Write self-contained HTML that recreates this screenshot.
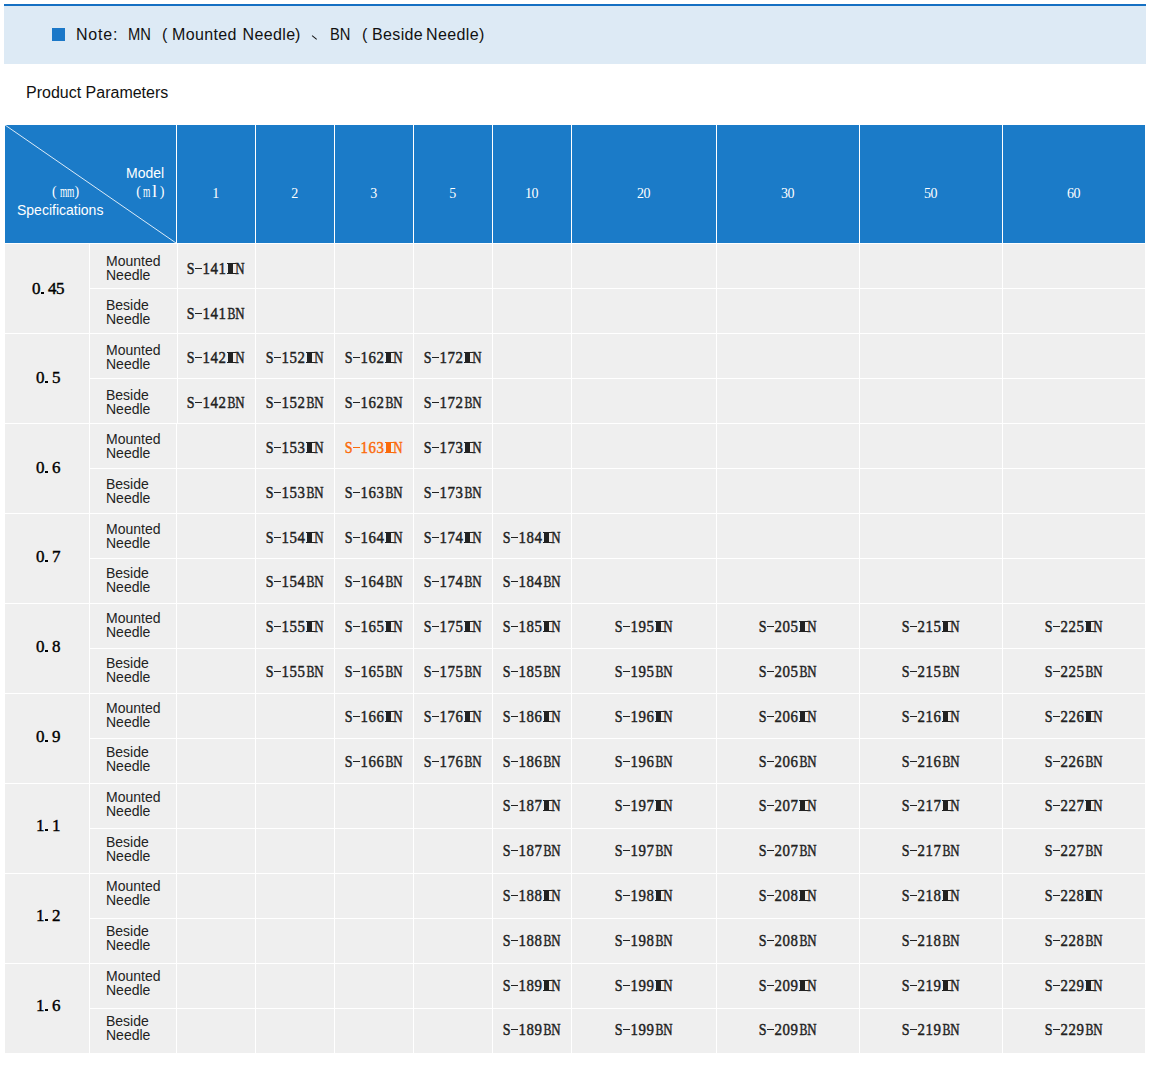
<!DOCTYPE html>
<html><head><meta charset="utf-8"><style>
*{margin:0;padding:0;box-sizing:border-box}
html,body{width:1150px;height:1090px;background:#fff;overflow:hidden;position:relative}
.a{position:absolute}
.sans{font-family:"Liberation Sans",sans-serif}
.c{position:absolute;background:#efefef}
.h{position:absolute;background:#1b7bc8}
.t{position:absolute;white-space:nowrap;line-height:16px}
.code{position:absolute;white-space:nowrap;font-family:"Liberation Serif",serif;font-size:16.5px;font-weight:normal;-webkit-text-stroke:0.45px currentColor;line-height:16px;color:#222;height:16px}
.code b,.num b,.hn b{display:inline-block;width:8px;text-align:center;font-weight:inherit;position:relative;height:16px;vertical-align:top}
.code b i,.num b i,.hn b i{font-style:normal;display:inline-block;transform:scaleX(0.78)}
.code b.d:before,.num b.d:before{content:"";position:absolute;left:1px;top:7px;width:7px;height:1.4px;background:currentColor}
.code b.m:before{content:"";position:absolute;left:1.5px;top:2px;width:5.5px;height:11px;background:currentColor}

.code b.m i{position:absolute;left:0.5px;top:2px;width:9px;height:11px;border-top:1px solid currentColor;border-bottom:1px solid currentColor;transform:none}
.num b.p:before{content:"";position:absolute;left:1px;top:11px;width:3px;height:2px;background:currentColor}
.lbl{position:absolute;white-space:nowrap;font-family:"Liberation Sans",sans-serif;font-size:14px;line-height:14px;color:#222}
.num{position:absolute;white-space:nowrap;font-family:"Liberation Serif",serif;font-size:17px;font-weight:normal;-webkit-text-stroke:0.4px #000;line-height:16px;color:#000;height:16px}
.hn{position:absolute;white-space:nowrap;font-family:"Liberation Serif",serif;font-size:13px;line-height:16px;color:#fff;height:16px}
.hn b{width:6.5px}
.hn b i{transform:none}
.hd{font-size:14px}
.hd b i{transform:scaleX(1)!important}
</style></head><body>

<div class="a" style="left:4px;top:4px;width:1142px;height:60px;background:#ddeaf5;border-top:2px solid #1570c3"></div>
<div class="a" style="left:52px;top:28px;width:13px;height:13px;background:#1b78c8"></div>
<div class="t sans" style="left:76px;top:27px;font-size:16px;color:#111;letter-spacing:0.8px;transform:scaleX(1);transform-origin:left top">Note</div>
<div class="t sans" style="left:113px;top:27px;font-size:16px;color:#111;letter-spacing:0px;transform:scaleX(1);transform-origin:left top">:</div>
<div class="t sans" style="left:127.5px;top:27px;font-size:16px;color:#111;letter-spacing:0px;transform:scaleX(0.92);transform-origin:left top">MN</div>
<div class="t sans" style="left:162px;top:27px;font-size:16px;color:#111;letter-spacing:0px;transform:scaleX(1);transform-origin:left top">(</div>
<div class="t sans" style="left:172px;top:27px;font-size:16px;color:#111;letter-spacing:0.37px;transform:scaleX(1);transform-origin:left top">Mounted</div>
<div class="t sans" style="left:242.5px;top:27px;font-size:16px;color:#111;letter-spacing:0.37px;transform:scaleX(1);transform-origin:left top">Needle</div>
<div class="t sans" style="left:295px;top:27px;font-size:16px;color:#111;letter-spacing:0px;transform:scaleX(1);transform-origin:left top">)</div>
<div class="a" style="left:311.5px;top:35px;width:6px;height:1.3px;background:#111;transform:rotate(40deg);transform-origin:left center"></div>
<div class="t sans" style="left:330px;top:27px;font-size:16px;color:#111;letter-spacing:0px;transform:scaleX(0.92);transform-origin:left top">BN</div>
<div class="t sans" style="left:362px;top:27px;font-size:16px;color:#111;letter-spacing:0px;transform:scaleX(1);transform-origin:left top">(</div>
<div class="t sans" style="left:372px;top:27px;font-size:16px;color:#111;letter-spacing:0.37px;transform:scaleX(1);transform-origin:left top">Beside</div>
<div class="t sans" style="left:426px;top:27px;font-size:16px;color:#111;letter-spacing:0.37px;transform:scaleX(1);transform-origin:left top">Needle</div>
<div class="t sans" style="left:479px;top:27px;font-size:16px;color:#111;letter-spacing:0px;transform:scaleX(1);transform-origin:left top">)</div>
<div class="t sans" style="left:26px;top:85px;font-size:16px;color:#111">Product Parameters</div>
<div class="a" style="left:5px;top:125px;width:1140px;height:928px;background:#fff"></div>
<div class="h" style="left:5px;top:125px;width:171px;height:118px"></div>
<div class="h" style="left:177px;top:125px;width:78px;height:118px"></div>
<div class="h" style="left:256px;top:125px;width:78px;height:118px"></div>
<div class="h" style="left:335px;top:125px;width:78px;height:118px"></div>
<div class="h" style="left:414px;top:125px;width:78px;height:118px"></div>
<div class="h" style="left:493px;top:125px;width:78px;height:118px"></div>
<div class="h" style="left:572px;top:125px;width:144px;height:118px"></div>
<div class="h" style="left:717px;top:125px;width:142px;height:118px"></div>
<div class="h" style="left:860px;top:125px;width:142px;height:118px"></div>
<div class="h" style="left:1003px;top:125px;width:142px;height:118px"></div>
<svg class="a" style="left:5px;top:125px" width="171" height="118"><line x1="0" y1="0" x2="171" y2="118" stroke="#fff" stroke-opacity="0.85" stroke-width="1"/></svg>
<div class="t sans" style="left:126px;top:165px;font-size:14px;color:#fff">Model</div>
<div class="t sans" style="left:17px;top:202px;font-size:14px;color:#fff">Specifications</div>
<div class="a" style="left:52px;top:185px;font-family:'Liberation Serif',serif;font-size:14px;line-height:14px;color:#fff;transform:scaleX(1);transform-origin:left top;white-space:nowrap">(</div>
<div class="a" style="left:59.5px;top:183px;font-family:'Liberation Serif',serif;font-size:17.5px;line-height:17.5px;color:#fff;transform:scaleX(0.54);transform-origin:left top;white-space:nowrap">m</div>
<div class="a" style="left:67px;top:183px;font-family:'Liberation Serif',serif;font-size:17.5px;line-height:17.5px;color:#fff;transform:scaleX(0.54);transform-origin:left top;white-space:nowrap">m</div>
<div class="a" style="left:74.5px;top:185px;font-family:'Liberation Serif',serif;font-size:14px;line-height:14px;color:#fff;transform:scaleX(1);transform-origin:left top;white-space:nowrap">)</div>
<div class="a" style="left:136.3px;top:185px;font-family:'Liberation Serif',serif;font-size:14px;line-height:14px;color:#fff;transform:scaleX(1);transform-origin:left top;white-space:nowrap">(</div>
<div class="a" style="left:143.2px;top:183px;font-family:'Liberation Serif',serif;font-size:17.5px;line-height:17.5px;color:#fff;transform:scaleX(0.54);transform-origin:left top;white-space:nowrap">m</div>
<div class="a" style="left:151.5px;top:183px;font-family:'Liberation Serif',serif;font-size:17px;line-height:17px;color:#fff;transform:scaleX(1.1);transform-origin:left top;white-space:nowrap">l</div>
<div class="a" style="left:159.7px;top:185px;font-family:'Liberation Serif',serif;font-size:14px;line-height:14px;color:#fff;transform:scaleX(1);transform-origin:left top;white-space:nowrap">)</div>
<div class="hn hd" style="left:212.2px;top:186px"><b><i style="transform:scaleX(1)">1</i></b></div>
<div class="hn hd" style="left:291.2px;top:186px"><b><i style="transform:scaleX(1)">2</i></b></div>
<div class="hn hd" style="left:370.2px;top:186px"><b><i style="transform:scaleX(1)">3</i></b></div>
<div class="hn hd" style="left:449.2px;top:186px"><b><i style="transform:scaleX(1)">5</i></b></div>
<div class="hn hd" style="left:525.0px;top:186px"><b><i style="transform:scaleX(1)">1</i></b><b><i style="transform:scaleX(1)">0</i></b></div>
<div class="hn hd" style="left:637.0px;top:186px"><b><i style="transform:scaleX(1)">2</i></b><b><i style="transform:scaleX(1)">0</i></b></div>
<div class="hn hd" style="left:781.0px;top:186px"><b><i style="transform:scaleX(1)">3</i></b><b><i style="transform:scaleX(1)">0</i></b></div>
<div class="hn hd" style="left:924.0px;top:186px"><b><i style="transform:scaleX(1)">5</i></b><b><i style="transform:scaleX(1)">0</i></b></div>
<div class="hn hd" style="left:1067.0px;top:186px"><b><i style="transform:scaleX(1)">6</i></b><b><i style="transform:scaleX(1)">0</i></b></div>
<div class="c" style="left:5px;top:244px;width:84px;height:89px"></div>
<div class="num" style="left:32.0px;top:281px"><b><i style="transform:scaleX(1)">0</i></b><b class="p"></b><b><i style="transform:scaleX(1)">4</i></b><b><i style="transform:scaleX(1)">5</i></b></div>
<div class="c" style="left:90px;top:244px;width:87px;height:44px"></div>
<div class="c" style="left:178px;top:244px;width:77px;height:44px"></div>
<div class="c" style="left:256px;top:244px;width:78px;height:44px"></div>
<div class="c" style="left:335px;top:244px;width:78px;height:44px"></div>
<div class="c" style="left:414px;top:244px;width:78px;height:44px"></div>
<div class="c" style="left:493px;top:244px;width:78px;height:44px"></div>
<div class="c" style="left:572px;top:244px;width:144px;height:44px"></div>
<div class="c" style="left:717px;top:244px;width:142px;height:44px"></div>
<div class="c" style="left:860px;top:244px;width:142px;height:44px"></div>
<div class="c" style="left:1003px;top:244px;width:142px;height:44px"></div>
<div class="lbl" style="left:106px;top:254px">Mounted<br>Needle</div>
<div class="code" style="left:186.0px;top:261px;color:#222"><b><i style="transform:scaleX(0.85)">S</i></b><b class="d"></b><b><i style="transform:scaleX(0.9)">1</i></b><b><i style="transform:scaleX(0.9)">4</i></b><b><i style="transform:scaleX(0.9)">1</i></b><b class="m"><i></i></b><b><i style="transform:scaleX(0.78)">N</i></b></div>
<div class="c" style="left:90px;top:289px;width:87px;height:44px"></div>
<div class="c" style="left:178px;top:289px;width:77px;height:44px"></div>
<div class="c" style="left:256px;top:289px;width:78px;height:44px"></div>
<div class="c" style="left:335px;top:289px;width:78px;height:44px"></div>
<div class="c" style="left:414px;top:289px;width:78px;height:44px"></div>
<div class="c" style="left:493px;top:289px;width:78px;height:44px"></div>
<div class="c" style="left:572px;top:289px;width:144px;height:44px"></div>
<div class="c" style="left:717px;top:289px;width:142px;height:44px"></div>
<div class="c" style="left:860px;top:289px;width:142px;height:44px"></div>
<div class="c" style="left:1003px;top:289px;width:142px;height:44px"></div>
<div class="lbl" style="left:106px;top:298px">Beside<br>Needle</div>
<div class="code" style="left:186.0px;top:306px;color:#222"><b><i style="transform:scaleX(0.85)">S</i></b><b class="d"></b><b><i style="transform:scaleX(0.9)">1</i></b><b><i style="transform:scaleX(0.9)">4</i></b><b><i style="transform:scaleX(0.9)">1</i></b><b><i style="transform:scaleX(0.72)">B</i></b><b><i style="transform:scaleX(0.78)">N</i></b></div>
<div class="c" style="left:5px;top:334px;width:84px;height:89px"></div>
<div class="num" style="left:36.0px;top:370px"><b><i style="transform:scaleX(1)">0</i></b><b class="p"></b><b><i style="transform:scaleX(1)">5</i></b></div>
<div class="c" style="left:90px;top:334px;width:87px;height:44px"></div>
<div class="c" style="left:178px;top:334px;width:77px;height:44px"></div>
<div class="c" style="left:256px;top:334px;width:78px;height:44px"></div>
<div class="c" style="left:335px;top:334px;width:78px;height:44px"></div>
<div class="c" style="left:414px;top:334px;width:78px;height:44px"></div>
<div class="c" style="left:493px;top:334px;width:78px;height:44px"></div>
<div class="c" style="left:572px;top:334px;width:144px;height:44px"></div>
<div class="c" style="left:717px;top:334px;width:142px;height:44px"></div>
<div class="c" style="left:860px;top:334px;width:142px;height:44px"></div>
<div class="c" style="left:1003px;top:334px;width:142px;height:44px"></div>
<div class="lbl" style="left:106px;top:343px">Mounted<br>Needle</div>
<div class="code" style="left:186.0px;top:350px;color:#222"><b><i style="transform:scaleX(0.85)">S</i></b><b class="d"></b><b><i style="transform:scaleX(0.9)">1</i></b><b><i style="transform:scaleX(0.9)">4</i></b><b><i style="transform:scaleX(0.9)">2</i></b><b class="m"><i></i></b><b><i style="transform:scaleX(0.78)">N</i></b></div>
<div class="code" style="left:265.0px;top:350px;color:#222"><b><i style="transform:scaleX(0.85)">S</i></b><b class="d"></b><b><i style="transform:scaleX(0.9)">1</i></b><b><i style="transform:scaleX(0.9)">5</i></b><b><i style="transform:scaleX(0.9)">2</i></b><b class="m"><i></i></b><b><i style="transform:scaleX(0.78)">N</i></b></div>
<div class="code" style="left:344.0px;top:350px;color:#222"><b><i style="transform:scaleX(0.85)">S</i></b><b class="d"></b><b><i style="transform:scaleX(0.9)">1</i></b><b><i style="transform:scaleX(0.9)">6</i></b><b><i style="transform:scaleX(0.9)">2</i></b><b class="m"><i></i></b><b><i style="transform:scaleX(0.78)">N</i></b></div>
<div class="code" style="left:423.0px;top:350px;color:#222"><b><i style="transform:scaleX(0.85)">S</i></b><b class="d"></b><b><i style="transform:scaleX(0.9)">1</i></b><b><i style="transform:scaleX(0.9)">7</i></b><b><i style="transform:scaleX(0.9)">2</i></b><b class="m"><i></i></b><b><i style="transform:scaleX(0.78)">N</i></b></div>
<div class="c" style="left:90px;top:379px;width:87px;height:44px"></div>
<div class="c" style="left:178px;top:379px;width:77px;height:44px"></div>
<div class="c" style="left:256px;top:379px;width:78px;height:44px"></div>
<div class="c" style="left:335px;top:379px;width:78px;height:44px"></div>
<div class="c" style="left:414px;top:379px;width:78px;height:44px"></div>
<div class="c" style="left:493px;top:379px;width:78px;height:44px"></div>
<div class="c" style="left:572px;top:379px;width:144px;height:44px"></div>
<div class="c" style="left:717px;top:379px;width:142px;height:44px"></div>
<div class="c" style="left:860px;top:379px;width:142px;height:44px"></div>
<div class="c" style="left:1003px;top:379px;width:142px;height:44px"></div>
<div class="lbl" style="left:106px;top:388px">Beside<br>Needle</div>
<div class="code" style="left:186.0px;top:395px;color:#222"><b><i style="transform:scaleX(0.85)">S</i></b><b class="d"></b><b><i style="transform:scaleX(0.9)">1</i></b><b><i style="transform:scaleX(0.9)">4</i></b><b><i style="transform:scaleX(0.9)">2</i></b><b><i style="transform:scaleX(0.72)">B</i></b><b><i style="transform:scaleX(0.78)">N</i></b></div>
<div class="code" style="left:265.0px;top:395px;color:#222"><b><i style="transform:scaleX(0.85)">S</i></b><b class="d"></b><b><i style="transform:scaleX(0.9)">1</i></b><b><i style="transform:scaleX(0.9)">5</i></b><b><i style="transform:scaleX(0.9)">2</i></b><b><i style="transform:scaleX(0.72)">B</i></b><b><i style="transform:scaleX(0.78)">N</i></b></div>
<div class="code" style="left:344.0px;top:395px;color:#222"><b><i style="transform:scaleX(0.85)">S</i></b><b class="d"></b><b><i style="transform:scaleX(0.9)">1</i></b><b><i style="transform:scaleX(0.9)">6</i></b><b><i style="transform:scaleX(0.9)">2</i></b><b><i style="transform:scaleX(0.72)">B</i></b><b><i style="transform:scaleX(0.78)">N</i></b></div>
<div class="code" style="left:423.0px;top:395px;color:#222"><b><i style="transform:scaleX(0.85)">S</i></b><b class="d"></b><b><i style="transform:scaleX(0.9)">1</i></b><b><i style="transform:scaleX(0.9)">7</i></b><b><i style="transform:scaleX(0.9)">2</i></b><b><i style="transform:scaleX(0.72)">B</i></b><b><i style="transform:scaleX(0.78)">N</i></b></div>
<div class="c" style="left:5px;top:424px;width:84px;height:89px"></div>
<div class="num" style="left:36.0px;top:460px"><b><i style="transform:scaleX(1)">0</i></b><b class="p"></b><b><i style="transform:scaleX(1)">6</i></b></div>
<div class="c" style="left:90px;top:424px;width:86px;height:44px"></div>
<div class="c" style="left:177px;top:424px;width:78px;height:44px"></div>
<div class="c" style="left:256px;top:424px;width:78px;height:44px"></div>
<div class="c" style="left:335px;top:424px;width:78px;height:44px"></div>
<div class="c" style="left:414px;top:424px;width:78px;height:44px"></div>
<div class="c" style="left:493px;top:424px;width:78px;height:44px"></div>
<div class="c" style="left:572px;top:424px;width:144px;height:44px"></div>
<div class="c" style="left:717px;top:424px;width:142px;height:44px"></div>
<div class="c" style="left:860px;top:424px;width:142px;height:44px"></div>
<div class="c" style="left:1003px;top:424px;width:142px;height:44px"></div>
<div class="lbl" style="left:106px;top:432px">Mounted<br>Needle</div>
<div class="code" style="left:265.0px;top:440px;color:#222"><b><i style="transform:scaleX(0.85)">S</i></b><b class="d"></b><b><i style="transform:scaleX(0.9)">1</i></b><b><i style="transform:scaleX(0.9)">5</i></b><b><i style="transform:scaleX(0.9)">3</i></b><b class="m"><i></i></b><b><i style="transform:scaleX(0.78)">N</i></b></div>
<div class="code" style="left:344.0px;top:440px;color:#fb6a0a"><b><i style="transform:scaleX(0.85)">S</i></b><b class="d"></b><b><i style="transform:scaleX(0.9)">1</i></b><b><i style="transform:scaleX(0.9)">6</i></b><b><i style="transform:scaleX(0.9)">3</i></b><b class="m"><i></i></b><b><i style="transform:scaleX(0.78)">N</i></b></div>
<div class="code" style="left:423.0px;top:440px;color:#222"><b><i style="transform:scaleX(0.85)">S</i></b><b class="d"></b><b><i style="transform:scaleX(0.9)">1</i></b><b><i style="transform:scaleX(0.9)">7</i></b><b><i style="transform:scaleX(0.9)">3</i></b><b class="m"><i></i></b><b><i style="transform:scaleX(0.78)">N</i></b></div>
<div class="c" style="left:90px;top:469px;width:86px;height:44px"></div>
<div class="c" style="left:177px;top:469px;width:78px;height:44px"></div>
<div class="c" style="left:256px;top:469px;width:78px;height:44px"></div>
<div class="c" style="left:335px;top:469px;width:78px;height:44px"></div>
<div class="c" style="left:414px;top:469px;width:78px;height:44px"></div>
<div class="c" style="left:493px;top:469px;width:78px;height:44px"></div>
<div class="c" style="left:572px;top:469px;width:144px;height:44px"></div>
<div class="c" style="left:717px;top:469px;width:142px;height:44px"></div>
<div class="c" style="left:860px;top:469px;width:142px;height:44px"></div>
<div class="c" style="left:1003px;top:469px;width:142px;height:44px"></div>
<div class="lbl" style="left:106px;top:477px">Beside<br>Needle</div>
<div class="code" style="left:265.0px;top:485px;color:#222"><b><i style="transform:scaleX(0.85)">S</i></b><b class="d"></b><b><i style="transform:scaleX(0.9)">1</i></b><b><i style="transform:scaleX(0.9)">5</i></b><b><i style="transform:scaleX(0.9)">3</i></b><b><i style="transform:scaleX(0.72)">B</i></b><b><i style="transform:scaleX(0.78)">N</i></b></div>
<div class="code" style="left:344.0px;top:485px;color:#222"><b><i style="transform:scaleX(0.85)">S</i></b><b class="d"></b><b><i style="transform:scaleX(0.9)">1</i></b><b><i style="transform:scaleX(0.9)">6</i></b><b><i style="transform:scaleX(0.9)">3</i></b><b><i style="transform:scaleX(0.72)">B</i></b><b><i style="transform:scaleX(0.78)">N</i></b></div>
<div class="code" style="left:423.0px;top:485px;color:#222"><b><i style="transform:scaleX(0.85)">S</i></b><b class="d"></b><b><i style="transform:scaleX(0.9)">1</i></b><b><i style="transform:scaleX(0.9)">7</i></b><b><i style="transform:scaleX(0.9)">3</i></b><b><i style="transform:scaleX(0.72)">B</i></b><b><i style="transform:scaleX(0.78)">N</i></b></div>
<div class="c" style="left:5px;top:514px;width:84px;height:89px"></div>
<div class="num" style="left:36.0px;top:549px"><b><i style="transform:scaleX(1)">0</i></b><b class="p"></b><b><i style="transform:scaleX(1)">7</i></b></div>
<div class="c" style="left:90px;top:514px;width:86px;height:44px"></div>
<div class="c" style="left:177px;top:514px;width:78px;height:44px"></div>
<div class="c" style="left:256px;top:514px;width:78px;height:44px"></div>
<div class="c" style="left:335px;top:514px;width:78px;height:44px"></div>
<div class="c" style="left:414px;top:514px;width:78px;height:44px"></div>
<div class="c" style="left:493px;top:514px;width:78px;height:44px"></div>
<div class="c" style="left:572px;top:514px;width:144px;height:44px"></div>
<div class="c" style="left:717px;top:514px;width:142px;height:44px"></div>
<div class="c" style="left:860px;top:514px;width:142px;height:44px"></div>
<div class="c" style="left:1003px;top:514px;width:142px;height:44px"></div>
<div class="lbl" style="left:106px;top:522px">Mounted<br>Needle</div>
<div class="code" style="left:265.0px;top:530px;color:#222"><b><i style="transform:scaleX(0.85)">S</i></b><b class="d"></b><b><i style="transform:scaleX(0.9)">1</i></b><b><i style="transform:scaleX(0.9)">5</i></b><b><i style="transform:scaleX(0.9)">4</i></b><b class="m"><i></i></b><b><i style="transform:scaleX(0.78)">N</i></b></div>
<div class="code" style="left:344.0px;top:530px;color:#222"><b><i style="transform:scaleX(0.85)">S</i></b><b class="d"></b><b><i style="transform:scaleX(0.9)">1</i></b><b><i style="transform:scaleX(0.9)">6</i></b><b><i style="transform:scaleX(0.9)">4</i></b><b class="m"><i></i></b><b><i style="transform:scaleX(0.78)">N</i></b></div>
<div class="code" style="left:423.0px;top:530px;color:#222"><b><i style="transform:scaleX(0.85)">S</i></b><b class="d"></b><b><i style="transform:scaleX(0.9)">1</i></b><b><i style="transform:scaleX(0.9)">7</i></b><b><i style="transform:scaleX(0.9)">4</i></b><b class="m"><i></i></b><b><i style="transform:scaleX(0.78)">N</i></b></div>
<div class="code" style="left:502.0px;top:530px;color:#222"><b><i style="transform:scaleX(0.85)">S</i></b><b class="d"></b><b><i style="transform:scaleX(0.9)">1</i></b><b><i style="transform:scaleX(0.9)">8</i></b><b><i style="transform:scaleX(0.9)">4</i></b><b class="m"><i></i></b><b><i style="transform:scaleX(0.78)">N</i></b></div>
<div class="c" style="left:90px;top:559px;width:86px;height:44px"></div>
<div class="c" style="left:177px;top:559px;width:78px;height:44px"></div>
<div class="c" style="left:256px;top:559px;width:78px;height:44px"></div>
<div class="c" style="left:335px;top:559px;width:78px;height:44px"></div>
<div class="c" style="left:414px;top:559px;width:78px;height:44px"></div>
<div class="c" style="left:493px;top:559px;width:78px;height:44px"></div>
<div class="c" style="left:572px;top:559px;width:144px;height:44px"></div>
<div class="c" style="left:717px;top:559px;width:142px;height:44px"></div>
<div class="c" style="left:860px;top:559px;width:142px;height:44px"></div>
<div class="c" style="left:1003px;top:559px;width:142px;height:44px"></div>
<div class="lbl" style="left:106px;top:566px">Beside<br>Needle</div>
<div class="code" style="left:265.0px;top:574px;color:#222"><b><i style="transform:scaleX(0.85)">S</i></b><b class="d"></b><b><i style="transform:scaleX(0.9)">1</i></b><b><i style="transform:scaleX(0.9)">5</i></b><b><i style="transform:scaleX(0.9)">4</i></b><b><i style="transform:scaleX(0.72)">B</i></b><b><i style="transform:scaleX(0.78)">N</i></b></div>
<div class="code" style="left:344.0px;top:574px;color:#222"><b><i style="transform:scaleX(0.85)">S</i></b><b class="d"></b><b><i style="transform:scaleX(0.9)">1</i></b><b><i style="transform:scaleX(0.9)">6</i></b><b><i style="transform:scaleX(0.9)">4</i></b><b><i style="transform:scaleX(0.72)">B</i></b><b><i style="transform:scaleX(0.78)">N</i></b></div>
<div class="code" style="left:423.0px;top:574px;color:#222"><b><i style="transform:scaleX(0.85)">S</i></b><b class="d"></b><b><i style="transform:scaleX(0.9)">1</i></b><b><i style="transform:scaleX(0.9)">7</i></b><b><i style="transform:scaleX(0.9)">4</i></b><b><i style="transform:scaleX(0.72)">B</i></b><b><i style="transform:scaleX(0.78)">N</i></b></div>
<div class="code" style="left:502.0px;top:574px;color:#222"><b><i style="transform:scaleX(0.85)">S</i></b><b class="d"></b><b><i style="transform:scaleX(0.9)">1</i></b><b><i style="transform:scaleX(0.9)">8</i></b><b><i style="transform:scaleX(0.9)">4</i></b><b><i style="transform:scaleX(0.72)">B</i></b><b><i style="transform:scaleX(0.78)">N</i></b></div>
<div class="c" style="left:5px;top:604px;width:84px;height:89px"></div>
<div class="num" style="left:36.0px;top:639px"><b><i style="transform:scaleX(1)">0</i></b><b class="p"></b><b><i style="transform:scaleX(1)">8</i></b></div>
<div class="c" style="left:90px;top:604px;width:86px;height:44px"></div>
<div class="c" style="left:177px;top:604px;width:78px;height:44px"></div>
<div class="c" style="left:256px;top:604px;width:78px;height:44px"></div>
<div class="c" style="left:335px;top:604px;width:78px;height:44px"></div>
<div class="c" style="left:414px;top:604px;width:78px;height:44px"></div>
<div class="c" style="left:493px;top:604px;width:78px;height:44px"></div>
<div class="c" style="left:572px;top:604px;width:144px;height:44px"></div>
<div class="c" style="left:717px;top:604px;width:142px;height:44px"></div>
<div class="c" style="left:860px;top:604px;width:142px;height:44px"></div>
<div class="c" style="left:1003px;top:604px;width:142px;height:44px"></div>
<div class="lbl" style="left:106px;top:611px">Mounted<br>Needle</div>
<div class="code" style="left:265.0px;top:619px;color:#222"><b><i style="transform:scaleX(0.85)">S</i></b><b class="d"></b><b><i style="transform:scaleX(0.9)">1</i></b><b><i style="transform:scaleX(0.9)">5</i></b><b><i style="transform:scaleX(0.9)">5</i></b><b class="m"><i></i></b><b><i style="transform:scaleX(0.78)">N</i></b></div>
<div class="code" style="left:344.0px;top:619px;color:#222"><b><i style="transform:scaleX(0.85)">S</i></b><b class="d"></b><b><i style="transform:scaleX(0.9)">1</i></b><b><i style="transform:scaleX(0.9)">6</i></b><b><i style="transform:scaleX(0.9)">5</i></b><b class="m"><i></i></b><b><i style="transform:scaleX(0.78)">N</i></b></div>
<div class="code" style="left:423.0px;top:619px;color:#222"><b><i style="transform:scaleX(0.85)">S</i></b><b class="d"></b><b><i style="transform:scaleX(0.9)">1</i></b><b><i style="transform:scaleX(0.9)">7</i></b><b><i style="transform:scaleX(0.9)">5</i></b><b class="m"><i></i></b><b><i style="transform:scaleX(0.78)">N</i></b></div>
<div class="code" style="left:502.0px;top:619px;color:#222"><b><i style="transform:scaleX(0.85)">S</i></b><b class="d"></b><b><i style="transform:scaleX(0.9)">1</i></b><b><i style="transform:scaleX(0.9)">8</i></b><b><i style="transform:scaleX(0.9)">5</i></b><b class="m"><i></i></b><b><i style="transform:scaleX(0.78)">N</i></b></div>
<div class="code" style="left:614.0px;top:619px;color:#222"><b><i style="transform:scaleX(0.85)">S</i></b><b class="d"></b><b><i style="transform:scaleX(0.9)">1</i></b><b><i style="transform:scaleX(0.9)">9</i></b><b><i style="transform:scaleX(0.9)">5</i></b><b class="m"><i></i></b><b><i style="transform:scaleX(0.78)">N</i></b></div>
<div class="code" style="left:758.0px;top:619px;color:#222"><b><i style="transform:scaleX(0.85)">S</i></b><b class="d"></b><b><i style="transform:scaleX(0.9)">2</i></b><b><i style="transform:scaleX(0.9)">0</i></b><b><i style="transform:scaleX(0.9)">5</i></b><b class="m"><i></i></b><b><i style="transform:scaleX(0.78)">N</i></b></div>
<div class="code" style="left:901.0px;top:619px;color:#222"><b><i style="transform:scaleX(0.85)">S</i></b><b class="d"></b><b><i style="transform:scaleX(0.9)">2</i></b><b><i style="transform:scaleX(0.9)">1</i></b><b><i style="transform:scaleX(0.9)">5</i></b><b class="m"><i></i></b><b><i style="transform:scaleX(0.78)">N</i></b></div>
<div class="code" style="left:1044.0px;top:619px;color:#222"><b><i style="transform:scaleX(0.85)">S</i></b><b class="d"></b><b><i style="transform:scaleX(0.9)">2</i></b><b><i style="transform:scaleX(0.9)">2</i></b><b><i style="transform:scaleX(0.9)">5</i></b><b class="m"><i></i></b><b><i style="transform:scaleX(0.78)">N</i></b></div>
<div class="c" style="left:90px;top:649px;width:86px;height:44px"></div>
<div class="c" style="left:177px;top:649px;width:78px;height:44px"></div>
<div class="c" style="left:256px;top:649px;width:78px;height:44px"></div>
<div class="c" style="left:335px;top:649px;width:78px;height:44px"></div>
<div class="c" style="left:414px;top:649px;width:78px;height:44px"></div>
<div class="c" style="left:493px;top:649px;width:78px;height:44px"></div>
<div class="c" style="left:572px;top:649px;width:144px;height:44px"></div>
<div class="c" style="left:717px;top:649px;width:142px;height:44px"></div>
<div class="c" style="left:860px;top:649px;width:142px;height:44px"></div>
<div class="c" style="left:1003px;top:649px;width:142px;height:44px"></div>
<div class="lbl" style="left:106px;top:656px">Beside<br>Needle</div>
<div class="code" style="left:265.0px;top:664px;color:#222"><b><i style="transform:scaleX(0.85)">S</i></b><b class="d"></b><b><i style="transform:scaleX(0.9)">1</i></b><b><i style="transform:scaleX(0.9)">5</i></b><b><i style="transform:scaleX(0.9)">5</i></b><b><i style="transform:scaleX(0.72)">B</i></b><b><i style="transform:scaleX(0.78)">N</i></b></div>
<div class="code" style="left:344.0px;top:664px;color:#222"><b><i style="transform:scaleX(0.85)">S</i></b><b class="d"></b><b><i style="transform:scaleX(0.9)">1</i></b><b><i style="transform:scaleX(0.9)">6</i></b><b><i style="transform:scaleX(0.9)">5</i></b><b><i style="transform:scaleX(0.72)">B</i></b><b><i style="transform:scaleX(0.78)">N</i></b></div>
<div class="code" style="left:423.0px;top:664px;color:#222"><b><i style="transform:scaleX(0.85)">S</i></b><b class="d"></b><b><i style="transform:scaleX(0.9)">1</i></b><b><i style="transform:scaleX(0.9)">7</i></b><b><i style="transform:scaleX(0.9)">5</i></b><b><i style="transform:scaleX(0.72)">B</i></b><b><i style="transform:scaleX(0.78)">N</i></b></div>
<div class="code" style="left:502.0px;top:664px;color:#222"><b><i style="transform:scaleX(0.85)">S</i></b><b class="d"></b><b><i style="transform:scaleX(0.9)">1</i></b><b><i style="transform:scaleX(0.9)">8</i></b><b><i style="transform:scaleX(0.9)">5</i></b><b><i style="transform:scaleX(0.72)">B</i></b><b><i style="transform:scaleX(0.78)">N</i></b></div>
<div class="code" style="left:614.0px;top:664px;color:#222"><b><i style="transform:scaleX(0.85)">S</i></b><b class="d"></b><b><i style="transform:scaleX(0.9)">1</i></b><b><i style="transform:scaleX(0.9)">9</i></b><b><i style="transform:scaleX(0.9)">5</i></b><b><i style="transform:scaleX(0.72)">B</i></b><b><i style="transform:scaleX(0.78)">N</i></b></div>
<div class="code" style="left:758.0px;top:664px;color:#222"><b><i style="transform:scaleX(0.85)">S</i></b><b class="d"></b><b><i style="transform:scaleX(0.9)">2</i></b><b><i style="transform:scaleX(0.9)">0</i></b><b><i style="transform:scaleX(0.9)">5</i></b><b><i style="transform:scaleX(0.72)">B</i></b><b><i style="transform:scaleX(0.78)">N</i></b></div>
<div class="code" style="left:901.0px;top:664px;color:#222"><b><i style="transform:scaleX(0.85)">S</i></b><b class="d"></b><b><i style="transform:scaleX(0.9)">2</i></b><b><i style="transform:scaleX(0.9)">1</i></b><b><i style="transform:scaleX(0.9)">5</i></b><b><i style="transform:scaleX(0.72)">B</i></b><b><i style="transform:scaleX(0.78)">N</i></b></div>
<div class="code" style="left:1044.0px;top:664px;color:#222"><b><i style="transform:scaleX(0.85)">S</i></b><b class="d"></b><b><i style="transform:scaleX(0.9)">2</i></b><b><i style="transform:scaleX(0.9)">2</i></b><b><i style="transform:scaleX(0.9)">5</i></b><b><i style="transform:scaleX(0.72)">B</i></b><b><i style="transform:scaleX(0.78)">N</i></b></div>
<div class="c" style="left:5px;top:694px;width:84px;height:89px"></div>
<div class="num" style="left:36.0px;top:729px"><b><i style="transform:scaleX(1)">0</i></b><b class="p"></b><b><i style="transform:scaleX(1)">9</i></b></div>
<div class="c" style="left:90px;top:694px;width:86px;height:44px"></div>
<div class="c" style="left:177px;top:694px;width:78px;height:44px"></div>
<div class="c" style="left:256px;top:694px;width:78px;height:44px"></div>
<div class="c" style="left:335px;top:694px;width:78px;height:44px"></div>
<div class="c" style="left:414px;top:694px;width:78px;height:44px"></div>
<div class="c" style="left:493px;top:694px;width:78px;height:44px"></div>
<div class="c" style="left:572px;top:694px;width:144px;height:44px"></div>
<div class="c" style="left:717px;top:694px;width:142px;height:44px"></div>
<div class="c" style="left:860px;top:694px;width:142px;height:44px"></div>
<div class="c" style="left:1003px;top:694px;width:142px;height:44px"></div>
<div class="lbl" style="left:106px;top:701px">Mounted<br>Needle</div>
<div class="code" style="left:344.0px;top:709px;color:#222"><b><i style="transform:scaleX(0.85)">S</i></b><b class="d"></b><b><i style="transform:scaleX(0.9)">1</i></b><b><i style="transform:scaleX(0.9)">6</i></b><b><i style="transform:scaleX(0.9)">6</i></b><b class="m"><i></i></b><b><i style="transform:scaleX(0.78)">N</i></b></div>
<div class="code" style="left:423.0px;top:709px;color:#222"><b><i style="transform:scaleX(0.85)">S</i></b><b class="d"></b><b><i style="transform:scaleX(0.9)">1</i></b><b><i style="transform:scaleX(0.9)">7</i></b><b><i style="transform:scaleX(0.9)">6</i></b><b class="m"><i></i></b><b><i style="transform:scaleX(0.78)">N</i></b></div>
<div class="code" style="left:502.0px;top:709px;color:#222"><b><i style="transform:scaleX(0.85)">S</i></b><b class="d"></b><b><i style="transform:scaleX(0.9)">1</i></b><b><i style="transform:scaleX(0.9)">8</i></b><b><i style="transform:scaleX(0.9)">6</i></b><b class="m"><i></i></b><b><i style="transform:scaleX(0.78)">N</i></b></div>
<div class="code" style="left:614.0px;top:709px;color:#222"><b><i style="transform:scaleX(0.85)">S</i></b><b class="d"></b><b><i style="transform:scaleX(0.9)">1</i></b><b><i style="transform:scaleX(0.9)">9</i></b><b><i style="transform:scaleX(0.9)">6</i></b><b class="m"><i></i></b><b><i style="transform:scaleX(0.78)">N</i></b></div>
<div class="code" style="left:758.0px;top:709px;color:#222"><b><i style="transform:scaleX(0.85)">S</i></b><b class="d"></b><b><i style="transform:scaleX(0.9)">2</i></b><b><i style="transform:scaleX(0.9)">0</i></b><b><i style="transform:scaleX(0.9)">6</i></b><b class="m"><i></i></b><b><i style="transform:scaleX(0.78)">N</i></b></div>
<div class="code" style="left:901.0px;top:709px;color:#222"><b><i style="transform:scaleX(0.85)">S</i></b><b class="d"></b><b><i style="transform:scaleX(0.9)">2</i></b><b><i style="transform:scaleX(0.9)">1</i></b><b><i style="transform:scaleX(0.9)">6</i></b><b class="m"><i></i></b><b><i style="transform:scaleX(0.78)">N</i></b></div>
<div class="code" style="left:1044.0px;top:709px;color:#222"><b><i style="transform:scaleX(0.85)">S</i></b><b class="d"></b><b><i style="transform:scaleX(0.9)">2</i></b><b><i style="transform:scaleX(0.9)">2</i></b><b><i style="transform:scaleX(0.9)">6</i></b><b class="m"><i></i></b><b><i style="transform:scaleX(0.78)">N</i></b></div>
<div class="c" style="left:90px;top:739px;width:86px;height:44px"></div>
<div class="c" style="left:177px;top:739px;width:78px;height:44px"></div>
<div class="c" style="left:256px;top:739px;width:78px;height:44px"></div>
<div class="c" style="left:335px;top:739px;width:78px;height:44px"></div>
<div class="c" style="left:414px;top:739px;width:78px;height:44px"></div>
<div class="c" style="left:493px;top:739px;width:78px;height:44px"></div>
<div class="c" style="left:572px;top:739px;width:144px;height:44px"></div>
<div class="c" style="left:717px;top:739px;width:142px;height:44px"></div>
<div class="c" style="left:860px;top:739px;width:142px;height:44px"></div>
<div class="c" style="left:1003px;top:739px;width:142px;height:44px"></div>
<div class="lbl" style="left:106px;top:745px">Beside<br>Needle</div>
<div class="code" style="left:344.0px;top:754px;color:#222"><b><i style="transform:scaleX(0.85)">S</i></b><b class="d"></b><b><i style="transform:scaleX(0.9)">1</i></b><b><i style="transform:scaleX(0.9)">6</i></b><b><i style="transform:scaleX(0.9)">6</i></b><b><i style="transform:scaleX(0.72)">B</i></b><b><i style="transform:scaleX(0.78)">N</i></b></div>
<div class="code" style="left:423.0px;top:754px;color:#222"><b><i style="transform:scaleX(0.85)">S</i></b><b class="d"></b><b><i style="transform:scaleX(0.9)">1</i></b><b><i style="transform:scaleX(0.9)">7</i></b><b><i style="transform:scaleX(0.9)">6</i></b><b><i style="transform:scaleX(0.72)">B</i></b><b><i style="transform:scaleX(0.78)">N</i></b></div>
<div class="code" style="left:502.0px;top:754px;color:#222"><b><i style="transform:scaleX(0.85)">S</i></b><b class="d"></b><b><i style="transform:scaleX(0.9)">1</i></b><b><i style="transform:scaleX(0.9)">8</i></b><b><i style="transform:scaleX(0.9)">6</i></b><b><i style="transform:scaleX(0.72)">B</i></b><b><i style="transform:scaleX(0.78)">N</i></b></div>
<div class="code" style="left:614.0px;top:754px;color:#222"><b><i style="transform:scaleX(0.85)">S</i></b><b class="d"></b><b><i style="transform:scaleX(0.9)">1</i></b><b><i style="transform:scaleX(0.9)">9</i></b><b><i style="transform:scaleX(0.9)">6</i></b><b><i style="transform:scaleX(0.72)">B</i></b><b><i style="transform:scaleX(0.78)">N</i></b></div>
<div class="code" style="left:758.0px;top:754px;color:#222"><b><i style="transform:scaleX(0.85)">S</i></b><b class="d"></b><b><i style="transform:scaleX(0.9)">2</i></b><b><i style="transform:scaleX(0.9)">0</i></b><b><i style="transform:scaleX(0.9)">6</i></b><b><i style="transform:scaleX(0.72)">B</i></b><b><i style="transform:scaleX(0.78)">N</i></b></div>
<div class="code" style="left:901.0px;top:754px;color:#222"><b><i style="transform:scaleX(0.85)">S</i></b><b class="d"></b><b><i style="transform:scaleX(0.9)">2</i></b><b><i style="transform:scaleX(0.9)">1</i></b><b><i style="transform:scaleX(0.9)">6</i></b><b><i style="transform:scaleX(0.72)">B</i></b><b><i style="transform:scaleX(0.78)">N</i></b></div>
<div class="code" style="left:1044.0px;top:754px;color:#222"><b><i style="transform:scaleX(0.85)">S</i></b><b class="d"></b><b><i style="transform:scaleX(0.9)">2</i></b><b><i style="transform:scaleX(0.9)">2</i></b><b><i style="transform:scaleX(0.9)">6</i></b><b><i style="transform:scaleX(0.72)">B</i></b><b><i style="transform:scaleX(0.78)">N</i></b></div>
<div class="c" style="left:5px;top:784px;width:84px;height:89px"></div>
<div class="num" style="left:36.0px;top:818px"><b><i style="transform:scaleX(1)">1</i></b><b class="p"></b><b><i style="transform:scaleX(1)">1</i></b></div>
<div class="c" style="left:90px;top:784px;width:86px;height:44px"></div>
<div class="c" style="left:177px;top:784px;width:78px;height:44px"></div>
<div class="c" style="left:256px;top:784px;width:78px;height:44px"></div>
<div class="c" style="left:335px;top:784px;width:78px;height:44px"></div>
<div class="c" style="left:414px;top:784px;width:78px;height:44px"></div>
<div class="c" style="left:493px;top:784px;width:78px;height:44px"></div>
<div class="c" style="left:572px;top:784px;width:144px;height:44px"></div>
<div class="c" style="left:717px;top:784px;width:142px;height:44px"></div>
<div class="c" style="left:860px;top:784px;width:142px;height:44px"></div>
<div class="c" style="left:1003px;top:784px;width:142px;height:44px"></div>
<div class="lbl" style="left:106px;top:790px">Mounted<br>Needle</div>
<div class="code" style="left:502.0px;top:798px;color:#222"><b><i style="transform:scaleX(0.85)">S</i></b><b class="d"></b><b><i style="transform:scaleX(0.9)">1</i></b><b><i style="transform:scaleX(0.9)">8</i></b><b><i style="transform:scaleX(0.9)">7</i></b><b class="m"><i></i></b><b><i style="transform:scaleX(0.78)">N</i></b></div>
<div class="code" style="left:614.0px;top:798px;color:#222"><b><i style="transform:scaleX(0.85)">S</i></b><b class="d"></b><b><i style="transform:scaleX(0.9)">1</i></b><b><i style="transform:scaleX(0.9)">9</i></b><b><i style="transform:scaleX(0.9)">7</i></b><b class="m"><i></i></b><b><i style="transform:scaleX(0.78)">N</i></b></div>
<div class="code" style="left:758.0px;top:798px;color:#222"><b><i style="transform:scaleX(0.85)">S</i></b><b class="d"></b><b><i style="transform:scaleX(0.9)">2</i></b><b><i style="transform:scaleX(0.9)">0</i></b><b><i style="transform:scaleX(0.9)">7</i></b><b class="m"><i></i></b><b><i style="transform:scaleX(0.78)">N</i></b></div>
<div class="code" style="left:901.0px;top:798px;color:#222"><b><i style="transform:scaleX(0.85)">S</i></b><b class="d"></b><b><i style="transform:scaleX(0.9)">2</i></b><b><i style="transform:scaleX(0.9)">1</i></b><b><i style="transform:scaleX(0.9)">7</i></b><b class="m"><i></i></b><b><i style="transform:scaleX(0.78)">N</i></b></div>
<div class="code" style="left:1044.0px;top:798px;color:#222"><b><i style="transform:scaleX(0.85)">S</i></b><b class="d"></b><b><i style="transform:scaleX(0.9)">2</i></b><b><i style="transform:scaleX(0.9)">2</i></b><b><i style="transform:scaleX(0.9)">7</i></b><b class="m"><i></i></b><b><i style="transform:scaleX(0.78)">N</i></b></div>
<div class="c" style="left:90px;top:829px;width:86px;height:44px"></div>
<div class="c" style="left:177px;top:829px;width:78px;height:44px"></div>
<div class="c" style="left:256px;top:829px;width:78px;height:44px"></div>
<div class="c" style="left:335px;top:829px;width:78px;height:44px"></div>
<div class="c" style="left:414px;top:829px;width:78px;height:44px"></div>
<div class="c" style="left:493px;top:829px;width:78px;height:44px"></div>
<div class="c" style="left:572px;top:829px;width:144px;height:44px"></div>
<div class="c" style="left:717px;top:829px;width:142px;height:44px"></div>
<div class="c" style="left:860px;top:829px;width:142px;height:44px"></div>
<div class="c" style="left:1003px;top:829px;width:142px;height:44px"></div>
<div class="lbl" style="left:106px;top:835px">Beside<br>Needle</div>
<div class="code" style="left:502.0px;top:843px;color:#222"><b><i style="transform:scaleX(0.85)">S</i></b><b class="d"></b><b><i style="transform:scaleX(0.9)">1</i></b><b><i style="transform:scaleX(0.9)">8</i></b><b><i style="transform:scaleX(0.9)">7</i></b><b><i style="transform:scaleX(0.72)">B</i></b><b><i style="transform:scaleX(0.78)">N</i></b></div>
<div class="code" style="left:614.0px;top:843px;color:#222"><b><i style="transform:scaleX(0.85)">S</i></b><b class="d"></b><b><i style="transform:scaleX(0.9)">1</i></b><b><i style="transform:scaleX(0.9)">9</i></b><b><i style="transform:scaleX(0.9)">7</i></b><b><i style="transform:scaleX(0.72)">B</i></b><b><i style="transform:scaleX(0.78)">N</i></b></div>
<div class="code" style="left:758.0px;top:843px;color:#222"><b><i style="transform:scaleX(0.85)">S</i></b><b class="d"></b><b><i style="transform:scaleX(0.9)">2</i></b><b><i style="transform:scaleX(0.9)">0</i></b><b><i style="transform:scaleX(0.9)">7</i></b><b><i style="transform:scaleX(0.72)">B</i></b><b><i style="transform:scaleX(0.78)">N</i></b></div>
<div class="code" style="left:901.0px;top:843px;color:#222"><b><i style="transform:scaleX(0.85)">S</i></b><b class="d"></b><b><i style="transform:scaleX(0.9)">2</i></b><b><i style="transform:scaleX(0.9)">1</i></b><b><i style="transform:scaleX(0.9)">7</i></b><b><i style="transform:scaleX(0.72)">B</i></b><b><i style="transform:scaleX(0.78)">N</i></b></div>
<div class="code" style="left:1044.0px;top:843px;color:#222"><b><i style="transform:scaleX(0.85)">S</i></b><b class="d"></b><b><i style="transform:scaleX(0.9)">2</i></b><b><i style="transform:scaleX(0.9)">2</i></b><b><i style="transform:scaleX(0.9)">7</i></b><b><i style="transform:scaleX(0.72)">B</i></b><b><i style="transform:scaleX(0.78)">N</i></b></div>
<div class="c" style="left:5px;top:874px;width:84px;height:89px"></div>
<div class="num" style="left:36.0px;top:908px"><b><i style="transform:scaleX(1)">1</i></b><b class="p"></b><b><i style="transform:scaleX(1)">2</i></b></div>
<div class="c" style="left:90px;top:874px;width:86px;height:44px"></div>
<div class="c" style="left:177px;top:874px;width:78px;height:44px"></div>
<div class="c" style="left:256px;top:874px;width:78px;height:44px"></div>
<div class="c" style="left:335px;top:874px;width:78px;height:44px"></div>
<div class="c" style="left:414px;top:874px;width:78px;height:44px"></div>
<div class="c" style="left:493px;top:874px;width:78px;height:44px"></div>
<div class="c" style="left:572px;top:874px;width:144px;height:44px"></div>
<div class="c" style="left:717px;top:874px;width:142px;height:44px"></div>
<div class="c" style="left:860px;top:874px;width:142px;height:44px"></div>
<div class="c" style="left:1003px;top:874px;width:142px;height:44px"></div>
<div class="lbl" style="left:106px;top:879px">Mounted<br>Needle</div>
<div class="code" style="left:502.0px;top:888px;color:#222"><b><i style="transform:scaleX(0.85)">S</i></b><b class="d"></b><b><i style="transform:scaleX(0.9)">1</i></b><b><i style="transform:scaleX(0.9)">8</i></b><b><i style="transform:scaleX(0.9)">8</i></b><b class="m"><i></i></b><b><i style="transform:scaleX(0.78)">N</i></b></div>
<div class="code" style="left:614.0px;top:888px;color:#222"><b><i style="transform:scaleX(0.85)">S</i></b><b class="d"></b><b><i style="transform:scaleX(0.9)">1</i></b><b><i style="transform:scaleX(0.9)">9</i></b><b><i style="transform:scaleX(0.9)">8</i></b><b class="m"><i></i></b><b><i style="transform:scaleX(0.78)">N</i></b></div>
<div class="code" style="left:758.0px;top:888px;color:#222"><b><i style="transform:scaleX(0.85)">S</i></b><b class="d"></b><b><i style="transform:scaleX(0.9)">2</i></b><b><i style="transform:scaleX(0.9)">0</i></b><b><i style="transform:scaleX(0.9)">8</i></b><b class="m"><i></i></b><b><i style="transform:scaleX(0.78)">N</i></b></div>
<div class="code" style="left:901.0px;top:888px;color:#222"><b><i style="transform:scaleX(0.85)">S</i></b><b class="d"></b><b><i style="transform:scaleX(0.9)">2</i></b><b><i style="transform:scaleX(0.9)">1</i></b><b><i style="transform:scaleX(0.9)">8</i></b><b class="m"><i></i></b><b><i style="transform:scaleX(0.78)">N</i></b></div>
<div class="code" style="left:1044.0px;top:888px;color:#222"><b><i style="transform:scaleX(0.85)">S</i></b><b class="d"></b><b><i style="transform:scaleX(0.9)">2</i></b><b><i style="transform:scaleX(0.9)">2</i></b><b><i style="transform:scaleX(0.9)">8</i></b><b class="m"><i></i></b><b><i style="transform:scaleX(0.78)">N</i></b></div>
<div class="c" style="left:90px;top:919px;width:86px;height:44px"></div>
<div class="c" style="left:177px;top:919px;width:78px;height:44px"></div>
<div class="c" style="left:256px;top:919px;width:78px;height:44px"></div>
<div class="c" style="left:335px;top:919px;width:78px;height:44px"></div>
<div class="c" style="left:414px;top:919px;width:78px;height:44px"></div>
<div class="c" style="left:493px;top:919px;width:78px;height:44px"></div>
<div class="c" style="left:572px;top:919px;width:144px;height:44px"></div>
<div class="c" style="left:717px;top:919px;width:142px;height:44px"></div>
<div class="c" style="left:860px;top:919px;width:142px;height:44px"></div>
<div class="c" style="left:1003px;top:919px;width:142px;height:44px"></div>
<div class="lbl" style="left:106px;top:924px">Beside<br>Needle</div>
<div class="code" style="left:502.0px;top:933px;color:#222"><b><i style="transform:scaleX(0.85)">S</i></b><b class="d"></b><b><i style="transform:scaleX(0.9)">1</i></b><b><i style="transform:scaleX(0.9)">8</i></b><b><i style="transform:scaleX(0.9)">8</i></b><b><i style="transform:scaleX(0.72)">B</i></b><b><i style="transform:scaleX(0.78)">N</i></b></div>
<div class="code" style="left:614.0px;top:933px;color:#222"><b><i style="transform:scaleX(0.85)">S</i></b><b class="d"></b><b><i style="transform:scaleX(0.9)">1</i></b><b><i style="transform:scaleX(0.9)">9</i></b><b><i style="transform:scaleX(0.9)">8</i></b><b><i style="transform:scaleX(0.72)">B</i></b><b><i style="transform:scaleX(0.78)">N</i></b></div>
<div class="code" style="left:758.0px;top:933px;color:#222"><b><i style="transform:scaleX(0.85)">S</i></b><b class="d"></b><b><i style="transform:scaleX(0.9)">2</i></b><b><i style="transform:scaleX(0.9)">0</i></b><b><i style="transform:scaleX(0.9)">8</i></b><b><i style="transform:scaleX(0.72)">B</i></b><b><i style="transform:scaleX(0.78)">N</i></b></div>
<div class="code" style="left:901.0px;top:933px;color:#222"><b><i style="transform:scaleX(0.85)">S</i></b><b class="d"></b><b><i style="transform:scaleX(0.9)">2</i></b><b><i style="transform:scaleX(0.9)">1</i></b><b><i style="transform:scaleX(0.9)">8</i></b><b><i style="transform:scaleX(0.72)">B</i></b><b><i style="transform:scaleX(0.78)">N</i></b></div>
<div class="code" style="left:1044.0px;top:933px;color:#222"><b><i style="transform:scaleX(0.85)">S</i></b><b class="d"></b><b><i style="transform:scaleX(0.9)">2</i></b><b><i style="transform:scaleX(0.9)">2</i></b><b><i style="transform:scaleX(0.9)">8</i></b><b><i style="transform:scaleX(0.72)">B</i></b><b><i style="transform:scaleX(0.78)">N</i></b></div>
<div class="c" style="left:5px;top:964px;width:84px;height:89px"></div>
<div class="num" style="left:36.0px;top:998px"><b><i style="transform:scaleX(1)">1</i></b><b class="p"></b><b><i style="transform:scaleX(1)">6</i></b></div>
<div class="c" style="left:90px;top:964px;width:86px;height:44px"></div>
<div class="c" style="left:177px;top:964px;width:78px;height:44px"></div>
<div class="c" style="left:256px;top:964px;width:78px;height:44px"></div>
<div class="c" style="left:335px;top:964px;width:78px;height:44px"></div>
<div class="c" style="left:414px;top:964px;width:78px;height:44px"></div>
<div class="c" style="left:493px;top:964px;width:78px;height:44px"></div>
<div class="c" style="left:572px;top:964px;width:144px;height:44px"></div>
<div class="c" style="left:717px;top:964px;width:142px;height:44px"></div>
<div class="c" style="left:860px;top:964px;width:142px;height:44px"></div>
<div class="c" style="left:1003px;top:964px;width:142px;height:44px"></div>
<div class="lbl" style="left:106px;top:969px">Mounted<br>Needle</div>
<div class="code" style="left:502.0px;top:978px;color:#222"><b><i style="transform:scaleX(0.85)">S</i></b><b class="d"></b><b><i style="transform:scaleX(0.9)">1</i></b><b><i style="transform:scaleX(0.9)">8</i></b><b><i style="transform:scaleX(0.9)">9</i></b><b class="m"><i></i></b><b><i style="transform:scaleX(0.78)">N</i></b></div>
<div class="code" style="left:614.0px;top:978px;color:#222"><b><i style="transform:scaleX(0.85)">S</i></b><b class="d"></b><b><i style="transform:scaleX(0.9)">1</i></b><b><i style="transform:scaleX(0.9)">9</i></b><b><i style="transform:scaleX(0.9)">9</i></b><b class="m"><i></i></b><b><i style="transform:scaleX(0.78)">N</i></b></div>
<div class="code" style="left:758.0px;top:978px;color:#222"><b><i style="transform:scaleX(0.85)">S</i></b><b class="d"></b><b><i style="transform:scaleX(0.9)">2</i></b><b><i style="transform:scaleX(0.9)">0</i></b><b><i style="transform:scaleX(0.9)">9</i></b><b class="m"><i></i></b><b><i style="transform:scaleX(0.78)">N</i></b></div>
<div class="code" style="left:901.0px;top:978px;color:#222"><b><i style="transform:scaleX(0.85)">S</i></b><b class="d"></b><b><i style="transform:scaleX(0.9)">2</i></b><b><i style="transform:scaleX(0.9)">1</i></b><b><i style="transform:scaleX(0.9)">9</i></b><b class="m"><i></i></b><b><i style="transform:scaleX(0.78)">N</i></b></div>
<div class="code" style="left:1044.0px;top:978px;color:#222"><b><i style="transform:scaleX(0.85)">S</i></b><b class="d"></b><b><i style="transform:scaleX(0.9)">2</i></b><b><i style="transform:scaleX(0.9)">2</i></b><b><i style="transform:scaleX(0.9)">9</i></b><b class="m"><i></i></b><b><i style="transform:scaleX(0.78)">N</i></b></div>
<div class="c" style="left:90px;top:1009px;width:86px;height:44px"></div>
<div class="c" style="left:177px;top:1009px;width:78px;height:44px"></div>
<div class="c" style="left:256px;top:1009px;width:78px;height:44px"></div>
<div class="c" style="left:335px;top:1009px;width:78px;height:44px"></div>
<div class="c" style="left:414px;top:1009px;width:78px;height:44px"></div>
<div class="c" style="left:493px;top:1009px;width:78px;height:44px"></div>
<div class="c" style="left:572px;top:1009px;width:144px;height:44px"></div>
<div class="c" style="left:717px;top:1009px;width:142px;height:44px"></div>
<div class="c" style="left:860px;top:1009px;width:142px;height:44px"></div>
<div class="c" style="left:1003px;top:1009px;width:142px;height:44px"></div>
<div class="lbl" style="left:106px;top:1014px">Beside<br>Needle</div>
<div class="code" style="left:502.0px;top:1022px;color:#222"><b><i style="transform:scaleX(0.85)">S</i></b><b class="d"></b><b><i style="transform:scaleX(0.9)">1</i></b><b><i style="transform:scaleX(0.9)">8</i></b><b><i style="transform:scaleX(0.9)">9</i></b><b><i style="transform:scaleX(0.72)">B</i></b><b><i style="transform:scaleX(0.78)">N</i></b></div>
<div class="code" style="left:614.0px;top:1022px;color:#222"><b><i style="transform:scaleX(0.85)">S</i></b><b class="d"></b><b><i style="transform:scaleX(0.9)">1</i></b><b><i style="transform:scaleX(0.9)">9</i></b><b><i style="transform:scaleX(0.9)">9</i></b><b><i style="transform:scaleX(0.72)">B</i></b><b><i style="transform:scaleX(0.78)">N</i></b></div>
<div class="code" style="left:758.0px;top:1022px;color:#222"><b><i style="transform:scaleX(0.85)">S</i></b><b class="d"></b><b><i style="transform:scaleX(0.9)">2</i></b><b><i style="transform:scaleX(0.9)">0</i></b><b><i style="transform:scaleX(0.9)">9</i></b><b><i style="transform:scaleX(0.72)">B</i></b><b><i style="transform:scaleX(0.78)">N</i></b></div>
<div class="code" style="left:901.0px;top:1022px;color:#222"><b><i style="transform:scaleX(0.85)">S</i></b><b class="d"></b><b><i style="transform:scaleX(0.9)">2</i></b><b><i style="transform:scaleX(0.9)">1</i></b><b><i style="transform:scaleX(0.9)">9</i></b><b><i style="transform:scaleX(0.72)">B</i></b><b><i style="transform:scaleX(0.78)">N</i></b></div>
<div class="code" style="left:1044.0px;top:1022px;color:#222"><b><i style="transform:scaleX(0.85)">S</i></b><b class="d"></b><b><i style="transform:scaleX(0.9)">2</i></b><b><i style="transform:scaleX(0.9)">2</i></b><b><i style="transform:scaleX(0.9)">9</i></b><b><i style="transform:scaleX(0.72)">B</i></b><b><i style="transform:scaleX(0.78)">N</i></b></div>
</body></html>
